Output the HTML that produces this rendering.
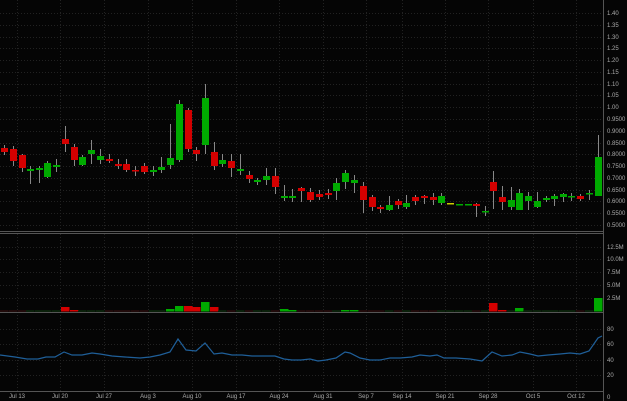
<!DOCTYPE html>
<html><head><meta charset="utf-8"><style>
html,body{margin:0;padding:0;background:#050505;}
svg{display:block;}
text{font-family:"Liberation Sans",sans-serif;font-size:6px;fill:#aaa;}
</style></head><body>
<svg id="s" width="627" height="401" viewBox="0 0 627 401">
<rect width="627" height="401" fill="#050505"/>
<g id="grid" stroke="#222" stroke-width="1" stroke-dasharray="1,2"></g>
<g id="c"></g>
<g id="v"></g>
<polyline fill="none" stroke="#1f5f99" stroke-width="1.2" points="0,355 15,357 27,359 38,359 46,357 55,357 64,352 72,355 82,355 92,353 100,354 112,356 125,357 140,358 150,357 160,355 170,352 178,339 186,350 196,351 205,343 214,354 222,353 232,355 242,355 252,356 262,356 275,356 284,359 292,360 301,360 310,359 318,361 326,360 336,358 345,352 350,353 360,358 370,360 380,360 390,358 400,358 412,357 420,355 430,356 437,355 444,358 456,358 470,359 482,361 492,352 502,356 512,355 520,352 530,354 538,356 548,355 560,354 570,353 580,354 589,351 598,338 602,336"/>
<g stroke="#555" stroke-width="1">
<line x1="0" y1="231.5" x2="603" y2="231.5"/>
<line x1="0" y1="233.5" x2="603" y2="233.5"/>
<line x1="0" y1="312.5" x2="603" y2="312.5"/>
<line x1="0" y1="391.5" x2="603" y2="391.5"/>
<line x1="603.5" y1="0" x2="603.5" y2="401"/>
</g>
<g text-anchor="start">
<text x="607" y="15">1.40</text><text x="607" y="27">1.35</text><text x="607" y="39">1.30</text><text x="607" y="50">1.25</text><text x="607" y="62">1.20</text><text x="607" y="74">1.15</text><text x="607" y="86">1.10</text><text x="607" y="97">1.05</text><text x="607" y="109">1.00</text><text x="607" y="121">0.9500</text><text x="607" y="133">0.9000</text><text x="607" y="145">0.8500</text><text x="607" y="156">0.8000</text><text x="607" y="168">0.7500</text><text x="607" y="180">0.7000</text><text x="607" y="192">0.6500</text><text x="607" y="203">0.6000</text><text x="607" y="215">0.5500</text><text x="607" y="227">0.5000</text>
<text x="607" y="249">12.5M</text><text x="607" y="261">10.0M</text><text x="607" y="274">7.5M</text><text x="607" y="287">5.0M</text><text x="607" y="300">2.5M</text>
<text x="607" y="331">80</text><text x="607" y="346">60</text><text x="607" y="362">40</text><text x="607" y="377">20</text><text x="607" y="399">0</text>
</g>
<g text-anchor="middle">
<text x="17" y="398">Jul 13</text><text x="60" y="398">Jul 20</text><text x="104" y="398">Jul 27</text><text x="148" y="398">Aug 3</text><text x="192" y="398">Aug 10</text><text x="236" y="398">Aug 17</text><text x="279" y="398">Aug 24</text><text x="323" y="398">Aug 31</text><text x="366" y="398">Sep 7</text><text x="402" y="398">Sep 14</text><text x="445" y="398">Sep 21</text><text x="488" y="398">Sep 28</text><text x="533" y="398">Oct 5</text><text x="576" y="398">Oct 12</text>
</g>
</svg>
<script>
var NS="http://www.w3.org/2000/svg";
function el(p,t,a){var e=document.createElementNS(NS,t);for(var k in a)e.setAttribute(k,a[k]);p.appendChild(e);return e;}
var g=document.getElementById('grid');
var hy=[13,25,37,48,60,72,84,95,107,119,131,143,154,166,178,190,201,213,225,247,259,272,285,298,329,344,360,375];
hy.forEach(function(y){el(g,'line',{x1:0,y1:y+.5,x2:603,y2:y+.5});});
[17,60,104,148,192,236,279,323,366,402,445,488,533,576].forEach(function(x){el(g,'line',{x1:x+.5,y1:0,x2:x+.5,y2:391});});
var R="#d40000",G="#00aa00",Y="#cccc00";
var c=[[4,R,148,152,145,155],[13,R,149,161,146,166],[22,R,155,168,154,172],[30,G,169,171,166,184],[39,G,168,170,166,183],[47,G,163,177,161,178],[56,G,165,167,159,172],[65,R,139,144,126,152],[74,R,147,160,144,166],[82,G,157,165,155,166],[91,G,150,154,140,164],[100,G,156,160,149,164],[109,R,159,161,154,163],[118,R,164,166,159,169],[126,R,164,170,159,172],[135,R,170,171,166,176],[144,R,166,172,163,174],[153,G,170,172,166,176],[161,G,167,170,157,173],[170,G,158,165,124,169],[179,G,104,160,100,162],[188,R,110,149,108,152],[196,R,150,154,147,161],[205,G,98,145,84,154],[214,R,152,166,142,170],[222,G,160,164,154,167],[231,R,161,168,154,177],[240,G,169,171,154,175],[249,R,175,179,171,183],[257,G,180,182,178,185],[266,G,176,180,168,185],[275,R,176,187,168,194],[284,G,196,198,185,201],[292,G,196,198,189,202],[301,R,188,191,187,202],[310,R,192,200,188,202],[319,R,194,197,190,200],[328,R,193,195,189,199],[336,G,183,191,178,200],[345,G,173,182,170,189],[354,G,180,183,175,193],[363,R,186,200,182,213],[372,R,197,207,195,211],[380,R,207,209,205,213],[389,G,205,210,196,211],[398,R,201,205,199,209],[406,G,203,207,195,209],[415,R,197,201,195,205],[424,R,196,198,195,204],[433,R,197,200,193,205],[441,G,196,203,193,205],[450,Y,203,204,203,204],[459,G,204,205,204,205],[468,G,204,205,204,205],[476,R,204,206,203,217],[485,G,211,212,206,216],[493,R,182,191,171,209],[502,R,197,202,186,210],[511,G,200,207,187,210],[519,G,193,210,189,210],[528,G,196,201,192,210],[537,G,201,207,192,208],[546,G,198,200,196,202],[554,G,196,199,194,206],[563,G,194,197,193,202],[571,G,196,197,193,201],[580,R,196,199,194,201],[589,G,193,194,190,200],[598,G,157,196,135,196]];
var cg=document.getElementById('c');
c.forEach(function(d){el(cg,'line',{x1:d[0]+.5,y1:d[4],x2:d[0]+.5,y2:d[5],stroke:'#888','stroke-width':1});
el(cg,'rect',{x:d[0]-3,y:d[2],width:7,height:Math.max(1.5,d[3]-d[2]),fill:d[1]});});
var vg=document.getElementById('v');
var vb={65:307,74:310,170:309,179:306,188:306,196:307,205:302,214:307,284:309,292:310,345:310,354:310,493:303,502:310,519:308,598:298};
c.forEach(function(d){var t=vb[d[0]]||310.5;var col=vb[d[0]]?d[1]:(d[1]==R?'#3a1010':'#103a10');el(vg,'rect',{x:d[0]-4,y:t,width:8.5,height:311.5-t,fill:col});});
</script>
</body></html>
